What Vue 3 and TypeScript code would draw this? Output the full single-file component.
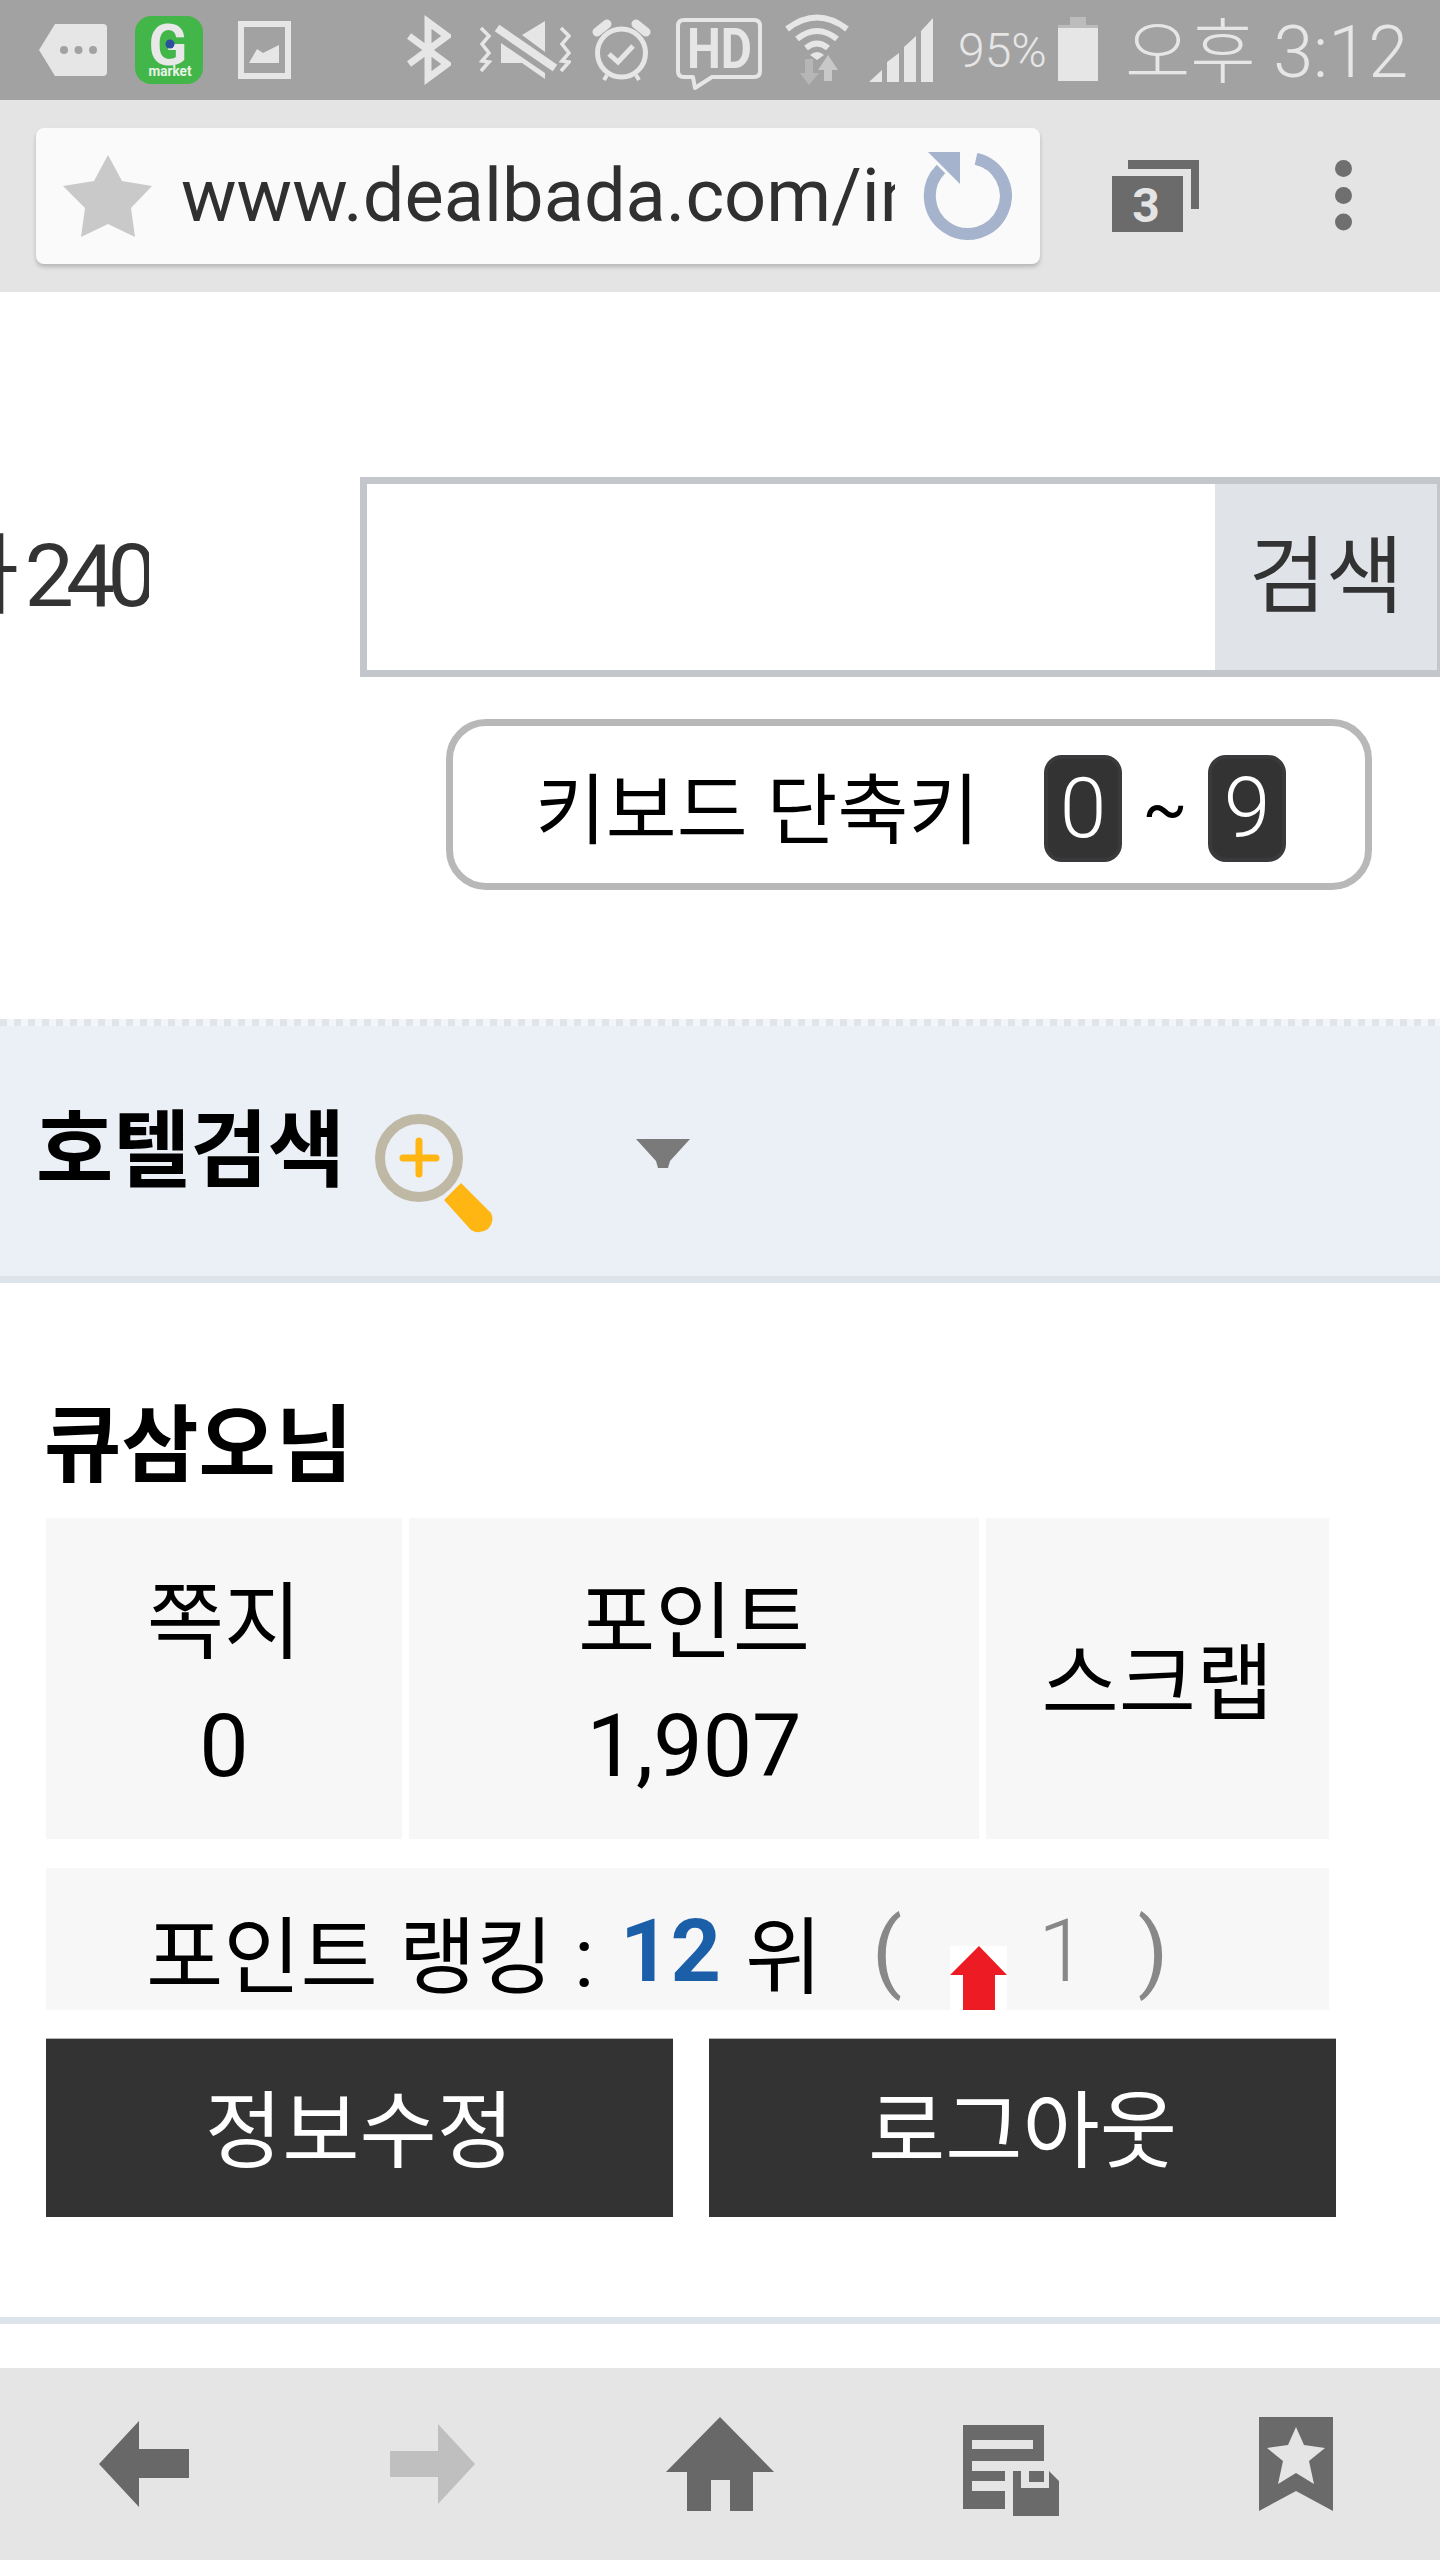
<script setup lang="ts">
interface Stat {
  label: string
  value?: string
}

const stats: Stat[] = [
  { label: '쪽지', value: '0' },
  { label: '포인트', value: '1,907' },
  { label: '스크랩' },
]
</script>

<template>
  <div class="page">
    <!-- android status bar; icon viewBoxes use screen px so they line up -->
    <div class="status">
      <svg class="ic tag" viewBox="39 0 68 100">
        <path d="M39 50 L55 24 H103 Q107 24 107 28 V72 Q107 76 103 76 H55 Z" fill="#e6e6e6" />
        <circle cx="64" cy="50" r="4" fill="#a2a2a2" />
        <circle cx="78.5" cy="50" r="4" fill="#a2a2a2" />
        <circle cx="93" cy="50" r="4" fill="#a2a2a2" />
      </svg>
      <svg class="ic gmarket" viewBox="135 0 68 100">
        <rect x="135" y="16" width="68" height="68" rx="16" fill="#43b649" />
        <text x="168" y="65" text-anchor="middle" class="g-letter">G</text>
        <circle cx="170" cy="44" r="4.5" fill="#2a4f9e" />
        <text x="170" y="76" text-anchor="middle" class="g-market" textLength="43" lengthAdjust="spacingAndGlyphs">market</text>
      </svg>
      <svg class="ic picture" viewBox="238 0 53 100">
        <rect x="241" y="24" width="47" height="52" fill="none" stroke="#e6e6e6" stroke-width="6" />
        <path d="M249 63 L257 49 L263 53 L279 45 V63 Z" fill="#e6e6e6" />
      </svg>
      <svg class="ic bt" viewBox="407 0 44 100">
        <path d="M409 36 L447 64 L428 78 V22 L447 36 L409 64" fill="none" stroke="#e6e6e6" stroke-width="7" />
      </svg>
      <svg class="ic mute" viewBox="479 0 92 100">
        <path d="M497 28 L555 68" stroke="#e6e6e6" stroke-width="8" />
        <path d="M545 21 V52 L522 35 Z M501 43 L545 73 V79 L522 63 H501 Z" fill="#e6e6e6" />
        <path d="M481 28 L489 36 L482 44 L489 53 L482 61 L489 62 L481 71" fill="none" stroke="#e6e6e6" stroke-width="3.5" />
        <path d="M561 28 L569 36 L562 44 L569 53 L562 61 L569 62 L561 71" fill="none" stroke="#e6e6e6" stroke-width="3.5" />
      </svg>
      <svg class="ic alarm" viewBox="592 0 59 100">
        <circle cx="621.5" cy="53" r="24" fill="none" stroke="#e6e6e6" stroke-width="5" />
        <path d="M597 32 L607 24 M636 24 L646 32" stroke="#e6e6e6" stroke-width="9" stroke-linecap="round" />
        <path d="M604 80 L607 75 M639 80 L636 75" stroke="#e6e6e6" stroke-width="4" />
        <path d="M609 54 L618 62 L633 46" fill="none" stroke="#e6e6e6" stroke-width="5" />
      </svg>
      <svg class="ic hd" viewBox="676 0 86 100">
        <path d="M684 20 H754 Q760 20 760 26 V71 Q760 77 754 77 H712 L695 88 L693 77 H684 Q678 77 678 71 V26 Q678 20 684 20 Z" fill="none" stroke="#e6e6e6" stroke-width="4" stroke-linejoin="round" />
        <text x="687" y="68" class="hd-text" textLength="65" lengthAdjust="spacingAndGlyphs">HD</text>
      </svg>
      <svg class="ic wifi" viewBox="784 0 66 100">
        <path d="M787 29 Q817 6 847 29 M797 39 Q817 23 837 39 M806 48 Q817 39 828 48" fill="none" stroke="#e6e6e6" stroke-width="6" />
        <path d="M810 55 Q817 49 824 55 L817 60 Z" fill="#e6e6e6" />
        <path d="M805 59 H813 V73 H819 L809 85 L800 73 H805 Z" fill="#b6b6b6" />
        <path d="M828 55 L838 70 H832 V81 H824 V70 H818 Z" fill="#c8c8c8" />
      </svg>
      <svg class="ic signal" viewBox="869 0 64 100">
        <path d="M869 82 L882 70 V82 Z M887 82 V62 L899 53 V82 Z M904 82 V47 L916 36 V82 Z M921 82 V31 L933 18 V82 Z" fill="#e6e6e6" />
      </svg>
      <span class="pct">95%</span>
      <svg class="ic battery" viewBox="1058 0 40 100">
        <path d="M1070 17 H1086 V25 H1098 V28 H1058 V25 H1070 Z" fill="#bcbcbc" />
        <rect x="1058" y="28" width="40" height="53" fill="#e6e6e6" />
      </svg>
      <span class="time"><span class="ampm">오후</span> 3:12</span>
    </div>

    <!-- browser toolbar -->
    <div class="toolbar">
      <div class="urlbox">
        <svg class="star" viewBox="63 128 89 136">
          <path d="M108 155 L122 181 L152 186 L131 208 L135 237 L108 224 L81 237 L85 208 L63 186 L94 181 Z" fill="#c9c9c9" />
        </svg>
        <div class="url">www.dealbada.com/index</div>
        <svg class="reload" viewBox="923 128 89 136">
          <path d="M976 158.8 A38 38 0 1 1 941 169" fill="none" stroke="#a6b3cc" stroke-width="12" />
          <path d="M928 152 H960 V184 Z" fill="#a6b3cc" />
        </svg>
      </div>
      <svg class="tabs" viewBox="1112 100 87 192">
        <path d="M1128 160 H1199 V209 H1191 V169 H1128 Z" fill="#6b6b6b" />
        <rect x="1112" y="176" width="71" height="56" fill="#6b6b6b" />
        <text x="1146" y="222" text-anchor="middle" class="tabs-count">3</text>
      </svg>
      <svg class="menu" viewBox="1334 100 17 192">
        <circle cx="1342.5" cy="168.5" r="8.5" fill="#6f6f6f" />
        <circle cx="1342.5" cy="195.5" r="8.5" fill="#6f6f6f" />
        <circle cx="1342.5" cy="222" r="8.5" fill="#6f6f6f" />
      </svg>
    </div>

    <!-- site header -->
    <div class="search-row">
      <div class="cut-text"><span>하 240</span></div>
      <div class="search">
        <div class="search-input"></div>
        <div class="search-btn">검색</div>
      </div>
    </div>

    <div class="shortcut">
      <span class="shortcut-label">키보드 단축키</span>
      <div class="keys">
        <span class="key">0</span>
        <span class="tilde">~</span>
        <span class="key">9</span>
      </div>
    </div>

    <!-- hotel search -->
    <div class="hotel">
      <div class="hotel-dots"></div>
      <div class="hotel-body">
        <span class="hotel-title">호텔검색</span>
        <svg class="magnifier" viewBox="375 1100 118 140">
          <circle cx="419" cy="1157" r="39" fill="none" stroke="#bfb8a5" stroke-width="10" />
          <path d="M419 1140 V1173 M403 1157 H436" stroke="#ffb612" stroke-width="7" stroke-linecap="round" />
          <path d="M461 1182 L444 1199 L471 1229 Q479 1234 488 1228 Q495 1220 491 1212 Z" fill="#ffb612" />
        </svg>
        <svg class="caret" viewBox="0 0 54 29">
          <path d="M0 0 H54 L34 22 L32 29 H22 L20 22 Z" fill="#7a7a7a" />
        </svg>
      </div>
    </div>

    <!-- member box -->
    <div class="member">
      <div class="member-name">큐삼오님</div>
      <div class="stats">
        <div v-for="stat in stats" :key="stat.label" class="stat">
          <div class="stat-label">{{ stat.label }}</div>
          <div v-if="stat.value" class="stat-value">{{ stat.value }}</div>
        </div>
      </div>
      <div class="rank">
        <span class="rank-label">포인트 랭킹 <span class="rank-colon">:</span></span>
        <span class="rank-num">12</span>
        <span class="rank-unit">위</span>
        <span class="rank-paren">(</span>
        <svg class="rank-arrow" viewBox="0 0 57 64">
          <rect width="57" height="64" fill="#fff" />
          <path d="M29 0 L57 29 H45 V64 H13 V29 H0 Z" fill="#ed1c24" />
        </svg>
        <span class="rank-diff">1</span>
        <span class="rank-paren close">)</span>
      </div>
      <div class="actions">
        <div class="action">정보수정</div>
        <div class="action">로그아웃</div>
      </div>
    </div>

    <div class="spacer"></div>

    <!-- browser bottom bar -->
    <div class="bottom">
      <svg class="nav" viewBox="99 2368 90 192">
        <path d="M99 2464 L139 2421 V2449 H189 V2478 H139 V2507 Z" fill="#686868" />
      </svg>
      <svg class="nav" viewBox="389 2368 85 192">
        <path d="M474 2464 L437 2424 V2451 H389 V2477 H437 V2504 Z" fill="#bfbfbf" />
      </svg>
      <svg class="nav" viewBox="666 2368 108 192">
        <path d="M720 2417 L774 2472 H753 V2511 H730 V2480 H711 V2511 H687 V2472 H666 Z" fill="#686868" />
      </svg>
      <svg class="nav nav-list" viewBox="963 2368 96 192">
        <path fill-rule="evenodd" d="M963 2425 H1044 V2461 H972 V2471 H1005 V2481 H972 V2491 H1005 V2509 H963 Z M972 2440 V2449 H1033 V2440 Z" fill="#6a6a6a" />
        <path d="M1013 2471 H1021 V2488 H1049 V2471 L1059 2481 V2516 H1013 Z M1029 2471 H1044 V2482 H1029 Z" fill="#6a6a6a" />
      </svg>
      <svg class="nav" viewBox="1259 2368 74 192">
        <path d="M1259 2417 H1333 V2511 L1296 2491 L1259 2511 Z" fill="#6a6a6a" />
        <path d="M1296 2427 L1304 2445 L1325 2448 L1309 2461 L1314 2484 L1296 2473 L1278 2484 L1283 2461 L1267 2448 L1288 2445 Z" fill="#e5e5e5" />
      </svg>
    </div>
  </div>
</template>

<style scoped>
.page {
  width: 1440px;
  height: 2560px;
  overflow: hidden;
  background: #fff;
  display: flex;
  flex-direction: column;
  font-family: Roboto, "Noto Sans CJK KR", sans-serif;
  color: #000;
}

.status {
  height: 100px;
  flex: none;
  display: flex;
  align-items: center;
  background: #a2a2a2;
  color: #e6e6e6;
}

.ic {
  height: 100px;
  flex: none;
  display: block;
}

.tag { width: 68px; margin-left: 39px; }
.gmarket { width: 68px; margin-left: 28px; }
.picture { width: 53px; margin-left: 35px; }
.bt { width: 44px; margin-left: 116px; }
.mute { width: 92px; margin-left: 28px; }
.alarm { width: 59px; margin-left: 21px; }
.hd { width: 86px; margin-left: 25px; }
.wifi { width: 66px; margin-left: 22px; }
.signal { width: 64px; margin-left: 19px; }
.battery { width: 40px; }

.g-letter {
  font: 700 57px Roboto, sans-serif;
  fill: #e8e8e8;
}

.g-market {
  font: 700 14px Roboto, sans-serif;
  fill: #e8f2e8;
}

.hd-text {
  font: 700 56px Roboto, sans-serif;
  fill: #e6e6e6;
}

.pct {
  width: 100px;
  margin-left: 25px;
  font-size: 48px;
  font-weight: 300;
  white-space: nowrap;
}

.time {
  margin-left: 27px;
  margin-bottom: 8px;
  font-size: 72px;
  font-weight: 300;
  white-space: nowrap;
}

.ampm {
  font-size: 71px;
  font-family: "Noto Sans CJK KR", sans-serif;
  font-weight: 300;
}

.toolbar {
  height: 192px;
  flex: none;
  display: flex;
  background: #e4e4e4;
}

.urlbox {
  width: 1004px;
  height: 136px;
  margin: 28px 0 0 36px;
  display: flex;
  align-items: center;
  background: #fafafa;
  border-radius: 8px;
  box-shadow: 0 3px 4px rgba(0, 0, 0, 0.2);
}

.star {
  width: 89px;
  height: 136px;
  margin-left: 27px;
  flex: none;
}

.url {
  width: 714px;
  margin-left: 29px;
  overflow: hidden;
  white-space: nowrap;
  font-size: 74px;
  line-height: 136px;
  color: #303030;
  flex: none;
}

.reload {
  width: 89px;
  height: 136px;
  margin-left: 28px;
  flex: none;
}

.tabs {
  width: 87px;
  height: 192px;
  margin-left: 72px;
  flex: none;
}

.tabs-count {
  font: 700 48px Roboto, sans-serif;
  fill: #e4e4e4;
}

.menu {
  width: 17px;
  height: 192px;
  margin-left: 136px;
  flex: none;
}

.search-row {
  margin-top: 185px;
  height: 200px;
  flex: none;
  display: flex;
  justify-content: space-between;
  align-items: center;
}

.cut-text {
  width: 149px;
  margin-bottom: 20px;
  display: flex;
  justify-content: flex-end;
  overflow: hidden;
  white-space: nowrap;
  font-size: 88px;
  letter-spacing: -8px;
  color: #333;
}

.search {
  width: 1080px;
  height: 200px;
  box-sizing: border-box;
  display: flex;
  border: 7px solid #c3c6cb;
  border-right-width: 3px;
}

.search-input {
  flex: 1;
  background: #fff;
}

.search-btn {
  width: 222px;
  padding-bottom: 16px;
  box-sizing: border-box;
  display: flex;
  align-items: center;
  justify-content: center;
  background: #e0e3e8;
  font-size: 84px;
  color: #333;
}

.shortcut {
  width: 926px;
  height: 171px;
  margin: 42px 0 0 446px;
  box-sizing: border-box;
  flex: none;
  display: flex;
  align-items: center;
  padding: 0 79px 0 82px;
  border: 7px solid #b8b8b8;
  border-radius: 40px;
}

.shortcut-label {
  font-size: 77px;
  white-space: nowrap;
}

.keys {
  margin-left: auto;
  margin-top: 8px;
  display: flex;
  align-items: center;
}

.key {
  width: 78px;
  height: 107px;
  box-sizing: border-box;
  display: flex;
  align-items: center;
  justify-content: center;
  background: #333;
  border: 4px solid #3a3a3c;
  border-radius: 18px;
  color: #fff;
  font-size: 84px;
  font-weight: 300;
}

.tilde {
  width: 86px;
  text-align: center;
  font-size: 66px;
}

.hotel {
  height: 264px;
  margin-top: 129px;
  flex: none;
  box-sizing: border-box;
  display: flex;
  flex-direction: column;
  background: #ebeff6;
  border-bottom: 7px solid #dde3eb;
}

.hotel-dots {
  height: 7px;
  flex: none;
  background: repeating-linear-gradient(90deg, #e0e4eb 0 7px, #f3f5f9 7px 14px);
}

.hotel-body {
  flex: 1;
  display: flex;
  align-items: center;
  padding: 0 0 16px 36px;
}

.hotel-title {
  font-size: 84px;
  font-weight: 700;
  width: 339px;
  white-space: nowrap;
}

.magnifier {
  width: 118px;
  height: 140px;
  margin-top: 56px;
  flex: none;
}

.caret {
  width: 54px;
  height: 29px;
  margin-left: 143px;
  margin-top: 20px;
  flex: none;
}

.member {
  padding: 0 0 0 46px;
  flex: none;
}

.member-name {
  height: 235px;
  box-sizing: border-box;
  padding-top: 104px;
  margin-left: -2px;
  font-size: 84px;
  font-weight: 700;
  line-height: 120px;
}

.stats {
  display: grid;
  grid-template-columns: 356px 570px 343px;
  column-gap: 7px;
}

.stat {
  height: 321px;
  box-sizing: border-box;
  padding-top: 12px;
  display: flex;
  flex-direction: column;
  align-items: center;
  justify-content: center;
  background: #f7f7f7;
}

.stat-label {
  font-size: 84px;
  line-height: 122px;
}

.stat-value {
  font-size: 88px;
  line-height: 122px;
}

.rank {
  width: 1283px;
  height: 142px;
  margin-top: 29px;
  display: flex;
  align-items: center;
  padding: 22px 0 0 100px;
  box-sizing: border-box;
  background: #f7f7f7;
  white-space: nowrap;
}

.rank-label {
  font-size: 84px;
  width: 474px;
}

.rank-colon {
  margin-left: 0;
}

.rank-num {
  font-size: 88px;
  font-weight: 700;
  color: #1c5fa9;
  width: 125px;
}

.rank-unit {
  font-size: 84px;
  width: 127px;
}

.rank-paren {
  font-size: 88px;
  color: #888;
  width: 78px;
}

.rank-paren.close {
  width: auto;
  margin-left: 51px;
}

.rank-arrow {
  width: 57px;
  height: 64px;
  align-self: flex-end;
  flex: none;
}

.rank-diff {
  font-size: 88px;
  font-weight: 300;
  color: #888;
  margin-left: 31px;
}

.actions {
  width: 1290px;
  margin-top: 28px;
  display: flex;
  gap: 36px;
}

.action {
  flex: 1;
  height: 179px;
  box-sizing: border-box;
  padding-bottom: 8px;
  display: flex;
  align-items: center;
  justify-content: center;
  background: #333;
  border-top: 1px solid #b5b5b5;
  color: #fff;
  font-size: 84px;
}

.spacer {
  height: 44px;
  margin-top: 100px;
  flex: none;
  border-top: 7px solid #dde3eb;
}

.bottom {
  height: 192px;
  flex: none;
  display: grid;
  grid-template-columns: repeat(5, 1fr);
  justify-items: center;
  background: #e5e5e5;
}

.nav {
  height: 192px;
  display: block;
}

.nav-list {
  margin-left: 6px;
}
</style>
